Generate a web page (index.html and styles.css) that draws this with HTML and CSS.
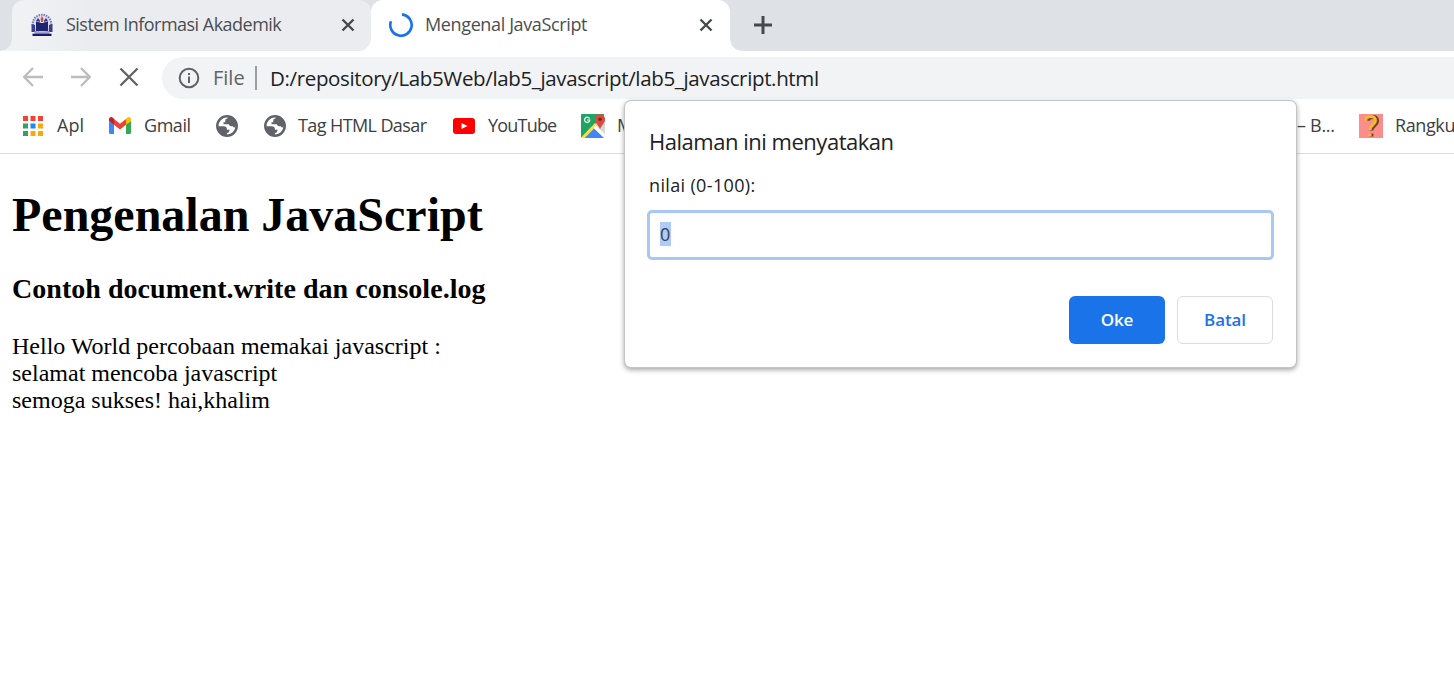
FILE: index.html
```html
<!DOCTYPE html>
<html lang="id">
<head>
<meta charset="utf-8">
<title>Mengenal JavaScript</title>
<link rel="stylesheet" href="styles.css">
</head>
<body>
<svg class="defs" width="0" height="0">
  <symbol id="globe" viewBox="0 0 22 22"><circle cx="11" cy="11" r="9.700" fill="#fff" stroke="#5f6368" stroke-width="2.500"/><path d="M12.500 1.500C12 4 9.300 3.500 9.300 5.500v1.700H7.500v2.100h5.300q.7 1.900 2.200 1.900h1.500c1 0 1 1.400 2 1.400.8 0 1.300-1.800 1.500-2.600C19.700 6 16.500 2 12.500 1.500z" fill="#5f6368"/><path d="M1.500 11.200h6.200c2 0 3.200 1 3.200 2.700v.9h2.600c0 2.400-.9 3-2.600 3.200v2.700C5.500 20.500 1.500 16.500 1.500 11.200z" fill="#5f6368"/></symbol>
</svg>
<div class="browser">
  <div class="tabs">
    <div class="tab tab-idle">
      <svg class="crest" width="24" height="24" viewBox="0 0 24 24">
        <circle cx="12" cy="11" r="9.300" fill="#d9dbe8" stroke="#777aad" stroke-width="2" stroke-dasharray="1.500 1"/>
        <path d="M6 8.500l6 1.500 6-1.500V18H6z" fill="#20246f"/><path d="M1.500 11L5 12v7H1.500zm21 0L19 12v7h3.500z" fill="#3a3e88"/>
        <path d="M4.500 18.500h15V21h-15z" fill="#9ea2cc"/><path d="M2.500 20.700h19V23h-19z" fill="#171b68"/>
        <path d="M6 8l2-3 3 4zm12 0l-2-3-3 4z" fill="#343a87"/><path d="M10 9V6l2-2 2 2v3l-2 1z" fill="#fff"/><path d="M12 3l1.500 3-.5 3h-2l-.5-3z" fill="#df4146"/>
      </svg>
      <span class="tab-title t-sistem">Sistem Informasi Akademik</span>
      <svg class="close" width="14" height="14" viewBox="0 0 14 14"><path d="M1.500 1.500l11 11m0-11l-11 11"/></svg>
    </div>
    <div class="tab tab-active">
      <svg class="spinner" width="24" height="24" viewBox="0 0 24 24"><path d="M13 1.400A10.700 10.700 0 1 1 2 8.200" fill="none" stroke="#1a73e8" stroke-width="2.600"/></svg>
      <span class="tab-title t-mengenal">Mengenal JavaScript</span>
      <svg class="close" width="14" height="14" viewBox="0 0 14 14"><path d="M1.500 1.500l11 11m0-11l-11 11"/></svg>
    </div>
    <svg class="plus" width="18" height="18" viewBox="0 0 18 18"><path d="M9 0v18M0 9h18"/></svg>
  </div>
  <div class="toolbar">
    <svg class="nav" width="20" height="20" viewBox="0 0 20 20"><path d="M20 10H1.500M10 1L1.200 10l8.800 9" stroke="#babcbe"/></svg>
    <svg class="nav" width="20" height="20" viewBox="0 0 20 20"><path d="M0 10h18.500M10 1l8.800 9-8.800 9" stroke="#babcbe"/></svg>
    <svg class="nav stop" width="20" height="20" viewBox="0 0 20 20"><path d="M1.500 1.500l17 17m0-17l-17 17" stroke="#5f6368"/></svg>
    <div class="address">
      <svg width="22" height="22" viewBox="0 0 22 22"><circle cx="11" cy="11" r="9.300" fill="none" stroke="#5f6368" stroke-width="2"/><path d="M10 9.500h2V16h-2zM10 6h2v2h-2z" fill="#5f6368"/></svg>
      <span class="scheme">File</span>
      <span class="divider"></span>
      <span class="url">D:/repository/Lab5Web/lab5_javascript/lab5_javascript.html</span>
    </div>
  </div>
  <div class="bookmarks">
    <div class="mark m-apl">
      <svg width="20" height="20" viewBox="0 0 20 20"><path d="M0 0h5v5H0zM7.500 0h5v5h-5zM15 0h5v5h-5z" fill="#f44336"/><path d="M0 7.500h5v5H0zM0 15h5v5H0z" fill="#34a061"/><path d="M7.500 7.500h5v5h-5z" fill="#1e88f5"/><path d="M15 7.500h5v5h-5zM7.500 15h5v5h-5zM15 15h5v5h-5z" fill="#fba90a"/></svg>
      <span>Apl</span>
    </div>
    <div class="mark m-gmail">
      <svg width="22" height="17" viewBox="0 0 22 17"><path d="M0 4v11.500Q0 17 1.500 17H5V7z" fill="#4285f4"/><path d="M22 4v11.500q0 1.500-1.500 1.500H17V7z" fill="#34a853"/><path d="M5 2l6 4.700L17 2v5.800l-6 4.700-6-4.700z" fill="#ea4335"/><path d="M0 4V2.300C0 .2 2.200-.8 3.900.8L5 1.700v6.100L0 4z" fill="#c5221f"/><path d="M22 4V2.300c0-2.100-2.200-3.100-3.900-1.500l-1.100.9v6.100L22 4z" fill="#fbbc04"/></svg>
      <span>Gmail</span>
    </div>
    <div class="mark m-globe">
      <svg width="22" height="22"><use href="#globe"/></svg>
    </div>
    <div class="mark m-html">
      <svg width="22" height="22"><use href="#globe"/></svg>
      <span>Tag HTML Dasar</span>
    </div>
    <div class="mark m-youtube">
      <svg width="22" height="16" viewBox="0 0 22 16"><rect width="22" height="16" rx="3" fill="#f00"/><path d="M8.500 5l6 3-6 3z" fill="#fff"/></svg>
      <span>YouTube</span>
    </div>
    <div class="mark m-maps">
      <svg width="24" height="24" viewBox="0 0 24 24"><path d="M1 0h22v24H1a1 1 0 0 1-1-1V1a1 1 0 0 1 1-1z" fill="#1fa463"/><path d="M14 10L24 3v21H14z" fill="#d8d8d8"/><path d="M0 23.500L14 9l3 3L4 24H0z" fill="#fddb43"/><path d="M14 13.500L24 24H4z" fill="#4285f4"/><path d="M14.500 11L24 20.500V24h-1L12.500 14z" fill="#fff"/><path d="M19 0a5.300 5.300 0 0 1 5 5.500c0 4-3.500 5-5 10-1.300-5-5-6-5-10A5.300 5.300 0 0 1 19 0z" fill="#dc4b3f"/><circle cx="19" cy="5.200" r="1.800" fill="#7b231e"/><path d="M8.500 4.600A2.600 2.600 0 1 0 8.800 6H6.200" fill="none" stroke="#fff" stroke-width="1.200"/></svg>
      <span>M</span>
    </div>
    <div class="mark m-b"><span>– B...</span></div>
    <div class="mark m-rangku">
      <svg width="24" height="24" viewBox="0 0 24 24"><path d="M0 0h24v24H0z" fill="#fb8d8b"/><path d="M8.500 6.500C10 2 18 1.500 18.200 7c0 4.500-6 4.500-5.700 9.500M12.500 19.500v3" fill="none" stroke="#744024" stroke-width="3.800"/><path d="M6.500 6.500C7.500 1.500 16.500 1 16.500 6.500c0 4.500-5.500 4.500-5.500 9.500M11 19.300v3" fill="none" stroke="#f0bd32" stroke-width="3"/></svg>
      <span>Rangku</span>
    </div>
  </div>
</div>
<main class="page">
  <h1>Pengenalan JavaScript</h1>
  <h3>Contoh document.write dan console.log</h3>
  <p>Hello World percobaan memakai javascript :<br>selamat mencoba javascript<br>semoga sukses! hai,khalim</p>
</main>
<div class="dialog">
  <div class="dialog-title"><span>Halaman ini menyatakan</span></div>
  <div class="dialog-label"><span>nilai (0-100):</span></div>
  <div class="field"><span class="selected">0</span></div>
  <div class="actions">
    <div class="btn btn-ok"><span>Oke</span></div>
    <div class="btn btn-cancel"><span>Batal</span></div>
  </div>
</div>
</body>
</html>
```
FILE: styles.css
```css
* { box-sizing: border-box; }
body {
  margin: 0;
  width: 1454px;
  height: 681px;
  overflow: hidden;
  position: relative;
  background: #fff;
  color: #3c4043;
  font-family: "Open Sans", "Noto Sans", sans-serif;
  white-space: nowrap;
}
svg { display: block; flex: none; }
.defs { position: absolute; }
.browser { height: 154px; border-bottom: 1px solid #dadce0; }
.tabs { display: flex; height: 51px; background: #dee1e6; padding-left: 12px; }
.tab { position: relative; display: flex; align-items: center; height: 51px; padding-bottom: 1px; border-radius: 12px 12px 0 0; }
.tab-idle { width: 359px; padding-left: 18px; background: linear-gradient(90deg, #f1f2f4, #ebecf0 22%); }
.tab-active { width: 359px; padding-left: 18px; background: #fff; }
.tab::before, .tab-active::after { content: ""; position: absolute; bottom: 0; width: 12px; height: 12px; }
.tab::before { left: -12px; background: radial-gradient(circle at 0 0, transparent 11.5px, #f1f2f4 12px); }
.tab-active::before { background: radial-gradient(circle at 0 0, transparent 11.5px, #fff 12px); }
.tab-active::after { right: -12px; background: radial-gradient(circle at 100% 0, transparent 11.5px, #fff 12px); }
.tab-title { font-size: 18px; line-height: 24px; margin-left: 12px; margin-top: -2px; width: 275px; color: #4a4e52; }
.t-sistem { letter-spacing: -.52px; }
.t-mengenal { width: 274px; letter-spacing: -.37px; }
.close path, .plus path { stroke: #45494d; stroke-width: 2.4; fill: none; }
.plus path { stroke-width: 3; }
.plus { margin: 16px 0 0 24px; }
.toolbar { display: flex; align-items: center; height: 45px; margin-top: 3px; padding-left: 23px; }
.nav { margin-right: 28px; }
.nav path { fill: none; stroke-width: 2.3; }
.stop { margin-right: 23px; }
.address { display: flex; align-items: center; width: 1292px; height: 42px; margin-top: 2px; padding-left: 16px; background: #f1f3f4; border-radius: 21px 0 0 21px; line-height: 28px; }
.scheme { width: 42px; margin-left: 13px; color: #5f6368; font-size: 20px; }
.divider { width: 2px; height: 24px; background: #9b9ea2; margin-right: 13px; }
.url { color: #202124; font-size: 20.5px; letter-spacing: -.35px; padding-top: 1px; }
.bookmarks { display: flex; align-items: center; height: 53px; padding-left: 23px; font-size: 18px; line-height: 24px; }
.mark { display: flex; align-items: center; gap: 13px; flex: none; letter-spacing: -.5px; }
.mark span { margin-top: -1px; }
.m-apl { width: 86px; gap: 14px; letter-spacing: 0; }
.m-gmail { width: 107px; letter-spacing: -.45px; }
.m-globe { width: 48px; }
.m-html { width: 189px; gap: 12px; letter-spacing: -.6px; }
.m-youtube { width: 128px; letter-spacing: -.8px; }
.m-maps { width: 716px; gap: 12px; }
.m-b { width: 62px; letter-spacing: -.3px; }
.m-rangku { gap: 12px; letter-spacing: -.4px; }
.page { padding: 0 12px; color: #000; font-family: "Liberation Serif", serif; }
.page h1 { margin: 33px 0 0; font-size: 48px; line-height: 56px; }
.page h3 { margin: 30px 0 0; font-size: 28px; line-height: 32px; letter-spacing: .04px; }
.page p { margin: 28px 0 0; font-size: 24px; line-height: 27px; }
.dialog { position: absolute; left: 625px; top: 101px; width: 671px; height: 266px; padding: 23px 23px; background: #fff; border-radius: 6px; box-shadow: 0 0 0 1px #c4c4c4, 0 2px 5px 1px rgba(0,0,0,.35); color: #202124; }
.dialog-title { height: 34px; padding-left: 1px; font-size: 22px; line-height: 34px; letter-spacing: -.48px; }
.dialog-label { height: 34px; margin-top: 10px; padding-left: 1px; font-size: 18px; line-height: 34px; letter-spacing: .35px; }
.field { height: 50px; margin: 8px -1px 0; padding: 10px; border: 3px solid #a8c7f5; border-radius: 5px; font-size: 18px; line-height: 24px; }
.selected { display: block; width: 11px; height: 24px; margin-top: -1px; background: #aecbfa; color: #3c4043; }
.actions { display: flex; justify-content: flex-end; gap: 12px; margin-top: 36px; }
.actions { margin-right: 0; }
.btn { display: flex; align-items: center; justify-content: center; width: 96px; height: 48px; padding-bottom: 2px; border-radius: 6px; font-size: 17px; font-weight: 600; letter-spacing: -.1px; color: #1a73e8; }
.btn-ok { background: #1a73e8; color: #fff; }
.btn-cancel { border: 1px solid #dadce0; }
```
